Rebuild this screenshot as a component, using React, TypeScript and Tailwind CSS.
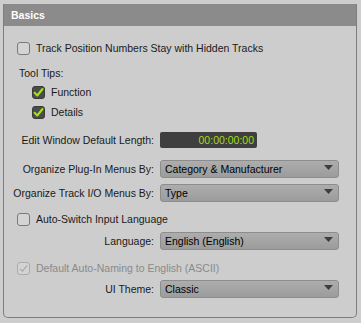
import React from 'react';

function Box({ checked, disabled }: { checked?: boolean; disabled?: boolean }) {
  if (checked) {
    return (
      <div className="w-[13px] h-[13px] shrink-0 rounded-[3px] bg-[#4b4b4b] border border-[#3a3a3a] flex items-center justify-center">
        <svg width="11" height="11" viewBox="0 0 11 11">
          <path d="M1.6 5.8 L4.3 8.5 L9.5 2" stroke="#a6e01c" strokeWidth="2.1" fill="none" strokeLinecap="round" strokeLinejoin="round" />
        </svg>
      </div>
    );
  }
  if (disabled) {
    return (
      <div className="w-[13px] h-[13px] shrink-0 rounded-[3px] bg-[#d3d3d3] border border-[#ababab] flex items-center justify-center">
        <svg width="11" height="11" viewBox="0 0 11 11">
          <path d="M2 5.8 L4.4 8.2 L9.2 2.4" stroke="#a8a8a8" strokeWidth="1.2" fill="none" />
        </svg>
      </div>
    );
  }
  return <div className="w-[13px] h-[13px] shrink-0 rounded-[3px] bg-[#d4d4d4] border border-[#7a7a7a]" />;
}

function Select({ value }: { value: string }) {
  return (
    <div className="w-[179px] h-[18px] rounded-[3px] border border-[#8c8c8c] bg-gradient-to-b from-[#adadad] to-[#9c9c9c] flex items-center justify-between pl-[4px] pr-[5px] text-black">
      <span>{value}</span>
      <svg width="9" height="6" viewBox="0 0 9 6" className="mb-[3px]">
        <path d="M0 0 H9 L4.5 5 Z" fill="#3e3e3e" />
      </svg>
    </div>
  );
}

function Row({ label, children, className }: { label: string; children: React.ReactNode; className?: string }) {
  return (
    <div className={'flex items-center ' + (className ?? '')}>
      <div className="w-[156px] shrink-0 text-right pr-[6px] whitespace-nowrap">{label}</div>
      {children}
    </div>
  );
}

export default function App() {
  return (
    <div
      className="w-[361px] h-[323px] bg-[#cdcdcd] pt-[4px] pl-[3px] text-[10.5px] leading-[14px] text-[#1a1a1a]"
      style={{ fontFamily: '"Liberation Sans", Arial, sans-serif' }}
    >
      <div className="w-[354px] h-[314px] border-l border-r border-b border-[#7d7d7d] rounded-b-[5px]">
        <div className="h-[22px] bg-[#8b8b8b] flex items-center pl-[7px] text-white font-bold">Basics</div>
        <div className="pl-[13px] mt-[15px] flex items-center gap-[6px] h-[14px]">
          <Box />
          <span>Track Position Numbers Stay with Hidden Tracks</span>
        </div>
        <div className="mt-[11px] pl-[15px] h-[14px]">Tool Tips:</div>
        <div className="pl-[28px] mt-[5px] flex items-center gap-[6px] h-[14px]">
          <Box checked />
          <span>Function</span>
        </div>
        <div className="pl-[28px] mt-[6px] flex items-center gap-[6px] h-[14px]">
          <Box checked />
          <span>Details</span>
        </div>
        <Row label="Edit Window Default Length:" className="mt-[13px] h-[16px]">
          <div className="w-[97px] h-[16px] bg-[#3f3f3f] rounded-[2px] text-right pr-[3px] text-[#a4dc1a] leading-[16px]">
            00:00:00:00
          </div>
        </Row>
        <Row label="Organize Plug-In Menus By:" className="mt-[12px]">
          <Select value="Category &amp; Manufacturer" />
        </Row>
        <Row label="Organize Track I/O Menus By:" className="mt-[6px]">
          <Select value="Type" />
        </Row>
        <div className="pl-[13px] mt-[10px] flex items-center gap-[6px] h-[14px]">
          <Box />
          <span>Auto-Switch Input Language</span>
        </div>
        <Row label="Language:" className="mt-[6px]">
          <Select value="English (English)" />
        </Row>
        <div className="pl-[13px] mt-[11px] flex items-center gap-[6px] h-[14px] text-[#8a8a8a]">
          <Box disabled />
          <span>Default Auto-Naming to English (ASCII)</span>
        </div>
        <Row label="UI Theme:" className="mt-[5px]">
          <Select value="Classic" />
        </Row>
      </div>
    </div>
  );
}
